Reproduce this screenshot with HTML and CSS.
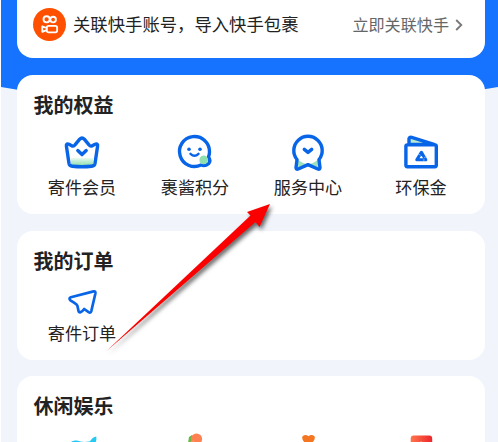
FILE: index.html
```html
<!DOCTYPE html>
<html lang="zh-CN">
<head>
<meta charset="utf-8">
<title>我的</title>
<link rel="stylesheet" href="styles.css">
</head>
<body>
<main class="screen">
  <svg class="backdrop" viewBox="0 0 497 92" aria-hidden="true"><path fill="#1673ff" d="M0 0H497V87Q374 108 248 108Q122 108 0 87Z"/></svg>
  <section class="card bind">
    <svg class="avatar" viewBox="0 0 32 32"><circle cx="16" cy="16" r="16" fill="#ff5000"/><g fill="none" stroke="#fff" stroke-width="1.8"><circle cx="13.2" cy="11" r="3"/><circle cx="19.5" cy="11.2" r="2.7"/><rect x="13.4" y="17.3" width="10" height="6.4" rx="1.8"/><path stroke-linejoin="round" d="M13.2 19.4L9 17.8V23.1L13.2 21.5"/></g></svg>
    <span class="bind-text">关联快手账号，导入快手包裹</span>
    <span class="bind-link">立即关联快手</span>
    <svg class="chevron" viewBox="0 0 8 12"><path d="M1.2 1L6.3 6L1.2 11" fill="none" stroke="#777" stroke-width="1.8"/></svg>
  </section>
  <section class="card benefits">
    <h2>我的权益</h2>
    <div class="grid">
      <div class="item">
        <svg viewBox="0 0 40 40"><defs><linearGradient id="mint" x2="0" y2="1"><stop stop-color="#e8fbf1"/><stop offset="1" stop-color="#8edfaf"/></linearGradient></defs><path fill="url(#mint)" d="M9 26H31V33.5H9Z"/><path class="line" d="M4.4 14C4 11.9 5.6 11.5 7 12.3L10.2 14Q11.9 14.5 13 12.8L17.7 7.2Q20 4.8 22.3 7.2L27 12.8Q28.1 14.5 29.8 14L33 12.3C34.4 11.5 36 11.9 35.6 14L33 31.6Q32.5 33.9 29.7 34.2Q20 35.2 10.3 34.2Q7.5 33.9 7 31.6Z"/><path class="line" d="M15.8 18.6L20 22.6L24.2 18.6"/></svg>
        <span>寄件会员</span>
      </div>
      <div class="item">
        <svg viewBox="0 0 40 40"><path class="line" d="M34.5 20A15 15 0 1 0 26 33Q30 34.7 33.4 31.8Q36.2 28.5 33.5 24.9Q34.5 22.5 34.5 20Z"/><circle cx="28.7" cy="27.9" r="4.3" fill="#8edfaf"/><circle class="dot" cx="14" cy="17.2" r="1.8"/><circle class="dot" cx="25" cy="17.2" r="1.8"/><path class="line thin" d="M15.5 21.8Q19.5 25.6 23.5 21.8"/></svg>
        <span>裹酱积分</span>
      </div>
      <div class="item">
        <svg viewBox="0 0 40 40"><path fill="#9fe3be" d="M8.5 26Q20 38 31.5 26V36L20 32L8.5 36Z"/><path class="line" d="M9 27.5A14.2 14.2 0 1 1 31 27.5L32 35.6Q31.8 37.9 29.8 37L20 32.6L10.2 37Q8.2 37.9 8 35.6Z"/><path class="line" d="M16.3 17.4L20 20.4L23.7 17.4"/></svg>
        <span>服务中心</span>
      </div>
      <div class="item">
        <svg viewBox="0 0 40 40"><path class="line flap" d="M8 12.4V6.8Q8.3 4.8 10.6 5.4L33 12.4Z"/><rect class="line wallet" x="4.9" y="12.9" width="30.4" height="21.8" rx="1.4"/><path d="M20.4 20.4L24.8 27.8H15.8Z" fill="#fff" stroke="#0965e8" stroke-width="3.1" stroke-linejoin="round"/><path d="M17 21.8L19.6 23.2M22.8 29.4L22.9 26.6M26 24.7L23.2 25.5" stroke="#b5d7ff" stroke-width=".6"/></svg>
        <span>环保金</span>
      </div>
    </div>
  </section>
  <section class="card orders">
    <h2>我的订单</h2>
    <div class="grid">
      <div class="item">
        <svg viewBox="0 0 40 40"><path class="line plane" d="M8.8 15.2L31.6 9.4Q33.8 9 33.4 11.5L29.3 29.1Q28.6 31.3 26.6 30.1L22.2 27Q20.6 29.3 18.4 30.2Q16.9 30.7 16.5 28.9L15.4 23.7Q14.8 22.2 12.8 21.2L8.4 18.4Q6.4 16.2 8.8 15.2Z"/></svg>
        <span>寄件订单</span>
      </div>
    </div>
  </section>
  <section class="card leisure">
    <h2>休闲娱乐</h2>
    <div class="grid">
      <div class="item"><svg viewBox="0 0 40 40"><path fill="#25c9f3" d="M9 11Q11 8.8 15 9.6Q21 12 28 10.2Q31 6 34.2 5.6Q35 9 33 13V32H12Z"/><path fill="#72e8fa" d="M12 11.3Q21 13 29 11V15H13Z"/></svg></div>
      <div class="item"><svg viewBox="0 0 40 40"><path fill="#64b844" d="M13 12L14 6L17 4L17 8L20 9L17 14Z"/><circle cx="21.5" cy="8" r="5.6" fill="#ff8050"/><path fill="#ff925c" d="M10 14L18 9L24 14Z"/></svg></div>
      <div class="item"><svg viewBox="0 0 40 40"><path fill="#ffd455" d="M7 11H34V30H7Z"/><path fill="#f57520" d="M20.5 5.2Q17.5 2.7 14.6 5.2Q12.5 8.5 20.5 15.5Q28.5 8.5 26.4 5.2Q23.5 2.7 20.5 5.2Z"/></svg></div>
      <div class="item"><svg viewBox="0 0 40 40"><defs><linearGradient id="red"><stop stop-color="#ff764b"/><stop offset="1" stop-color="#ed252c"/></linearGradient></defs><rect x="9.7" y="4.6" width="21.5" height="30" rx="3" fill="url(#red)"/><path d="M18 12.5Q20 10.2 22.5 12.5" fill="none" stroke="#ffc19b" stroke-width="1.5"/></svg></div>
    </div>
  </section>
  <svg class="pointer" viewBox="0 0 180 170" aria-hidden="true"><path fill="#fb0000" d="M6 161.5L150.5 25.5L147 22L170 14L159.5 37L155.5 32Z"/></svg>
</main>
</body>
</html>
```
FILE: styles.css
```css
* { box-sizing: border-box; }
body { margin: 0; background: #fff; font-family: "Noto Sans CJK SC", sans-serif; color: #222; }
.screen { position: relative; height: 442px; margin-left: 1px; padding: 0 13px 0 16px; overflow: hidden; background: #f1f5fb; }
.backdrop { position: absolute; left: 0; top: 0; width: 497px; height: 92px; }
.card { position: relative; background: #fff; border-radius: 16px; margin-bottom: 16.5px; }
.bind { display: flex; align-items: center; height: 58px; padding: 0 22px 9px 16px; border-radius: 0 0 16px 16px; }
.avatar { width: 33px; height: 33px; flex: none; }
.bind-text { margin-left: 7px; padding-bottom: 2px; font-size: 17.35px; white-space: nowrap; }
.bind-link { margin-left: auto; padding-bottom: 2px; font-size: 16.1px; color: #666; white-space: nowrap; }
.chevron { width: 8px; height: 12px; margin-left: 6px; flex: none; }
.benefits { height: 139.5px; }
.orders { height: 129px; }
.leisure { height: 90px; }
h2 { margin: 0; padding: 15px 17px 0 16.5px; font-size: 20px; line-height: 29px; font-weight: 700; }
.grid { display: grid; grid-template-columns: repeat(4, 113px); padding-left: 8.5px; }
.item { display: flex; flex-direction: column; align-items: center; }
.item svg { width: 40px; height: 40px; margin-top: 13px; }
.item span { font-size: 17.1px; line-height: 25px; margin-top: 2px; }
.orders .item svg { margin-top: 7px; }
.orders .item span { margin-top: -2px; }
.leisure .item svg { margin-top: 10.5px; }
.line { fill: none; stroke: #0965e8; stroke-width: 3.4; stroke-linejoin: round; stroke-linecap: round; }
.flap { fill: #b7ebd1; }
.wallet { fill: #fff; }
.thin { stroke-width: 2.4; }
.plane { stroke-width: 2.7; }
.dot { fill: #0965e8; }
.pointer { position: absolute; left: 99px; top: 190px; width: 180px; height: 170px; filter: drop-shadow(2px 3px 2px #0009); }
```
